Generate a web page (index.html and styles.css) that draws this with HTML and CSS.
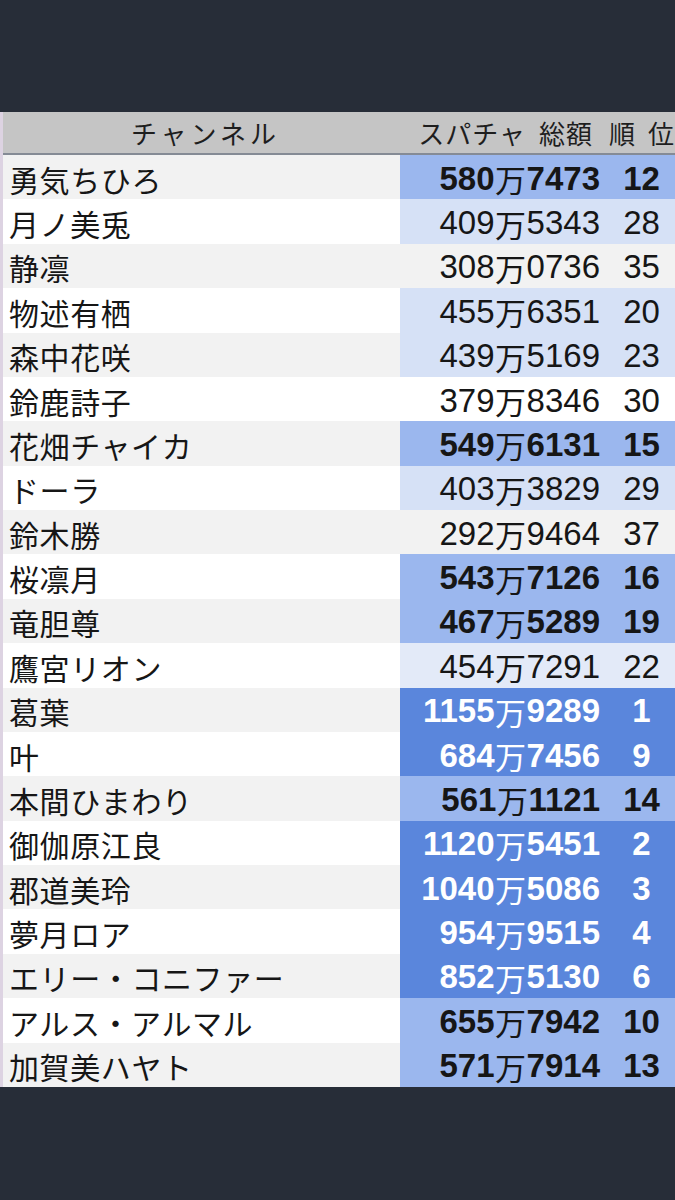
FILE: index.html
```html
<!DOCTYPE html>
<html lang="ja">
<head>
<meta charset="utf-8">
<link rel="stylesheet" href="styles.css">
</head>
<body>
<div class="top"></div>
<div class="table">
  <div class="head">
    <div class="h-name">チャンネル</div>
    <div class="h-amt"><span>スパチャ</span><span class="gap">総額</span></div>
    <div class="h-rank"><span>順</span><span class="gap">位</span></div>
  </div>
  <div class="row odd"><div class="name">勇気ちひろ</div><div class="amt med">580<span class="man">万</span>7473</div><div class="rank med">12</div></div>
  <div class="row"><div class="name">月ノ美兎</div><div class="amt light">409<span class="man">万</span>5343</div><div class="rank light">28</div></div>
  <div class="row odd"><div class="name">静凛</div><div class="amt">308<span class="man">万</span>0736</div><div class="rank">35</div></div>
  <div class="row"><div class="name">物述有栖</div><div class="amt light">455<span class="man">万</span>6351</div><div class="rank light">20</div></div>
  <div class="row odd"><div class="name">森中花咲</div><div class="amt light">439<span class="man">万</span>5169</div><div class="rank light">23</div></div>
  <div class="row"><div class="name">鈴鹿詩子</div><div class="amt">379<span class="man">万</span>8346</div><div class="rank">30</div></div>
  <div class="row odd"><div class="name">花畑チャイカ</div><div class="amt med">549<span class="man">万</span>6131</div><div class="rank med">15</div></div>
  <div class="row"><div class="name">ドーラ</div><div class="amt light">403<span class="man">万</span>3829</div><div class="rank light">29</div></div>
  <div class="row odd"><div class="name">鈴木勝</div><div class="amt">292<span class="man">万</span>9464</div><div class="rank">37</div></div>
  <div class="row"><div class="name">桜凛月</div><div class="amt med">543<span class="man">万</span>7126</div><div class="rank med">16</div></div>
  <div class="row odd"><div class="name">竜胆尊</div><div class="amt med">467<span class="man">万</span>5289</div><div class="rank med">19</div></div>
  <div class="row"><div class="name">鷹宮リオン</div><div class="amt vlight">454<span class="man">万</span>7291</div><div class="rank vlight">22</div></div>
  <div class="row odd"><div class="name">葛葉</div><div class="amt dark">1155<span class="man">万</span>9289</div><div class="rank dark">1</div></div>
  <div class="row"><div class="name">叶</div><div class="amt dark">684<span class="man">万</span>7456</div><div class="rank dark">9</div></div>
  <div class="row odd"><div class="name">本間ひまわり</div><div class="amt med">561<span class="man">万</span>1121</div><div class="rank med">14</div></div>
  <div class="row"><div class="name">御伽原江良</div><div class="amt dark">1120<span class="man">万</span>5451</div><div class="rank dark">2</div></div>
  <div class="row odd"><div class="name">郡道美玲</div><div class="amt dark">1040<span class="man">万</span>5086</div><div class="rank dark">3</div></div>
  <div class="row"><div class="name">夢月ロア</div><div class="amt dark">954<span class="man">万</span>9515</div><div class="rank dark">4</div></div>
  <div class="row odd"><div class="name">エリー・コニファー</div><div class="amt dark">852<span class="man">万</span>5130</div><div class="rank dark">6</div></div>
  <div class="row"><div class="name">アルス・アルマル</div><div class="amt med">655<span class="man">万</span>7942</div><div class="rank med">10</div></div>
  <div class="row odd"><div class="name">加賀美ハヤト</div><div class="amt med">571<span class="man">万</span>7914</div><div class="rank med">13</div></div>
</div>
</body>
</html>
```
FILE: styles.css
```css
html, body {
  margin: 0;
  padding: 0;
  background: #272d38;
}
body {
  width: 675px;
  height: 1200px;
  overflow: hidden;
}
.top {
  height: 112px;
}
.table {
  width: 675px;
  border-left: 3px solid #ddd3e2;
  box-sizing: border-box;
  font-family: "Noto Sans CJK JP", sans-serif;
  color: #161616;
}
.head {
  display: flex;
  height: 41px;
  align-items: center;
  background: #c5c5c5;
  border-bottom: 2px solid #858b95;
  font-size: 26px;
  color: #1e1e1e;
  white-space: nowrap;
}
.h-name {
  width: 397px;
  text-align: center;
  padding-left: 8px;
  box-sizing: border-box;
  letter-spacing: 4px;
}
.h-amt {
  width: 193px;
  display: flex;
  justify-content: flex-end;
  letter-spacing: 1px;
}
.h-rank {
  flex: 1;
  display: flex;
  padding-left: 16px;
  letter-spacing: 0;
}
.gap {
  margin-left: 13px;
}
.row {
  display: flex;
  height: 44.38px;
  align-items: stretch;
  background: #ffffff;
}
.row.odd {
  background: #f2f2f2;
}
.name {
  width: 397px;
  padding-left: 6px;
  box-sizing: border-box;
  font-size: 30px;
  letter-spacing: 0.6px;
  display: flex;
  align-items: center;
  padding-top: 3px;
  white-space: nowrap;
}
.amt, .rank {
  display: flex;
  align-items: center;
  font-family: "Liberation Sans", Arial, sans-serif;
  font-size: 33px;
  padding-top: 3px;
  box-sizing: border-box;
}
.amt {
  width: 210px;
  justify-content: flex-end;
  padding-right: 10px;
}
.rank {
  flex: 1;
  justify-content: center;
  padding-right: 2px;
}
.man {
  font-family: "Noto Sans CJK JP", sans-serif;
  font-weight: 400;
  font-size: 31px;
  margin: 0 0.5px;
}
.vlight { background: #e3eaf8; }
.light { background: #d6e1f6; }
.med { background: #9bb7ee; font-weight: 700; }
.dark { background: #5a86dc; font-weight: 700; color: #ffffff; }
```
